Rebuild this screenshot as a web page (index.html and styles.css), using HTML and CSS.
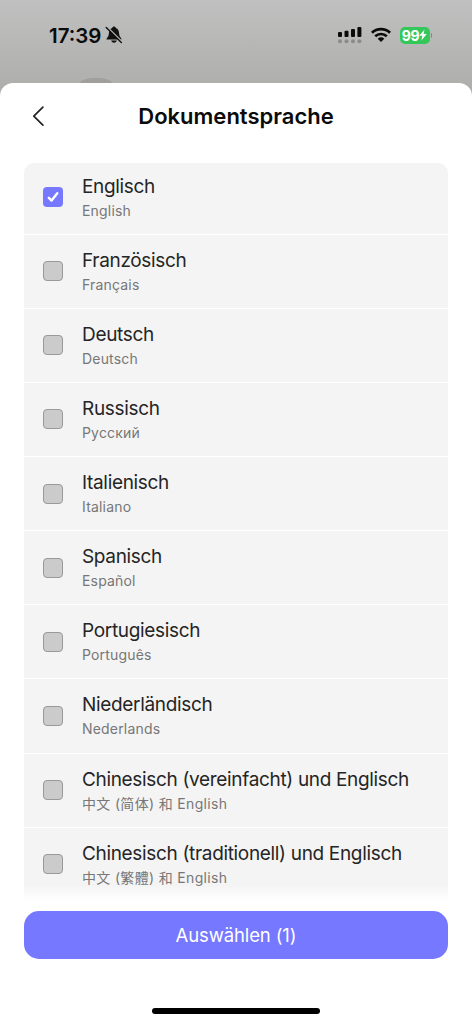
FILE: index.html
```html
<!DOCTYPE html>
<html lang="de">
<head>
<meta charset="utf-8">
<title>Dokumentsprache</title>
<link rel="stylesheet" href="styles.css">
</head>
<body>
<div class="screen">
  <header class="status">
    <div class="clock"><span class="time">17:39</span>
      <svg class="bell" width="18" height="18" viewBox="0 0 18 18"><path d="M1.4 13.4C1.6 11.8 3.6 10.8 3.8 8.2C4 4.4 5 2.5 7.2 1.9C7.6-.1 10.4-.1 10.8 1.9C13 2.5 14 4.4 14.2 8.2C14.4 10.8 16.4 11.8 16.6 13.4Z M6.2 14.5H11.8C11 17.5 7 17.5 6.2 14.5Z" fill="#111"/><path d="M2.2 1.1L17.4 16.1" stroke="#b6b6b6" stroke-width="1.5"/><path d="M1.2 1.5L16.3 16.4" stroke="#111" stroke-width="1.4" stroke-linecap="round"/></svg>
    </div>
    <div class="indicators">
      <svg width="24" height="18" viewBox="0 0 24 18"><g fill="#0b0b0b"><rect x="0" y="6" width="4" height="5" rx="1"/><rect x="6.5" y="4.8" width="4" height="6.2" rx="1"/><rect x="13" y="3" width="4" height="8" rx="1"/><rect x="19.4" y="1" width="4" height="10" rx="1"/></g><g fill="#8b8b8b"><circle cx="2" cy="15.2" r="2"/><circle cx="8.5" cy="15.2" r="2"/><circle cx="15" cy="15.2" r="2"/><circle cx="21.4" cy="15.2" r="2"/></g></svg>
      <svg class="wifi" width="20" height="16" viewBox="0 0 20 16"><g fill="none" stroke="#0b0b0b" stroke-width="2.7"><path d="M.9 5.7C6 .8 14 .8 19.1 5.7"/><path d="M4.2 9.3C7.5 6.2 12.5 6.2 15.8 9.3"/></g><path d="M6.7 11.7C8.6 9.9 11.4 9.9 13.3 11.7L10 15.1Z" fill="#0b0b0b"/></svg>
      <div class="battery"><span>99</span><svg width="8" height="12" viewBox="0 0 8 12"><path d="M5.5.5L.3 6.8H3.3L2.4 11.5L7.7 5H4.6Z" fill="#fff"/></svg></div>
      <i class="battery-tip"></i>
    </div>
    <i class="grabber"></i>
  </header>
  <main class="sheet">
    <div class="title-bar">
      <svg class="back" width="14" height="22" viewBox="0 0 14 22"><path d="M11.9 2.2L2.8 11.2L11.9 20.2" fill="none" stroke="#222" stroke-width="1.7" stroke-linecap="round" stroke-linejoin="round"/></svg>
      <h1>Dokumentsprache</h1>
    </div>
    <div class="list">
      <label class="row"><span class="box checked"><svg width="20" height="20" viewBox="0 0 20 20"><path d="M5.8 10.8L8.6 13.6L14.3 6.2" fill="none" stroke="#fff" stroke-width="2.4" stroke-linecap="round" stroke-linejoin="round"/></svg></span><span class="labels"><b>Englisch</b><small>English</small></span></label>
      <label class="row"><span class="box"></span><span class="labels"><b>Französisch</b><small>Français</small></span></label>
      <label class="row"><span class="box"></span><span class="labels"><b>Deutsch</b><small>Deutsch</small></span></label>
      <label class="row"><span class="box"></span><span class="labels"><b>Russisch</b><small>Русский</small></span></label>
      <label class="row"><span class="box"></span><span class="labels"><b>Italienisch</b><small>Italiano</small></span></label>
      <label class="row"><span class="box"></span><span class="labels"><b>Spanisch</b><small>Español</small></span></label>
      <label class="row"><span class="box"></span><span class="labels"><b>Portugiesisch</b><small>Português</small></span></label>
      <label class="row"><span class="box"></span><span class="labels"><b>Niederländisch</b><small>Nederlands</small></span></label>
      <label class="row"><span class="box"></span><span class="labels"><b>Chinesisch (vereinfacht) und Englisch</b><small class="cjk" lang="zh-Hans">中文 (简体) 和 English</small></span></label>
      <label class="row"><span class="box"></span><span class="labels"><b>Chinesisch (traditionell) und Englisch</b><small class="cjk" lang="zh-Hant">中文 (繁體) 和 English</small></span></label>
      <div class="fade"></div>
    </div>
    <button class="select">Auswählen (1)</button>
    <div class="home"></div>
  </main>
</div>
</body>
</html>
```
FILE: styles.css
```css
* { box-sizing: border-box; }
body { margin: 0; font-family: Inter, "Noto Sans CJK SC", sans-serif; }
.screen { width: 472px; height: 1024px; overflow: hidden; display: flex; flex-direction: column; background: linear-gradient(#c0c0c0, #adadab 94px); }
.status { position: relative; flex: none; height: 83px; padding: 26px 40px 0 49px; display: flex; justify-content: space-between; align-items: flex-start; }
.clock { display: flex; gap: 4px; align-items: center; height: 18px; }
.time { font-size: 20.5px; font-weight: 600; letter-spacing: 0; color: #0b0b0b; }
.indicators { display: flex; align-items: center; height: 18px; }
.wifi { margin-left: 8.5px; }
.battery { margin-left: 9px; width: 30px; height: 17px; border-radius: 5px; background: #34c759; color: #fff; display: flex; align-items: center; justify-content: center; font-size: 14px; font-weight: 700; line-height: 17px; letter-spacing: -0.3px; }
.battery-tip { width: 1.5px; height: 5px; margin-left: 1px; border-radius: 0 2px 2px 0; background: #888; }
.grabber { position: absolute; left: 80px; bottom: 0; width: 32px; height: 5px; border-radius: 16px 16px 0 0 / 5px 5px 0 0; background: #a09f9e; }
.sheet { flex: 1; background: #fff; border-radius: 13px 13px 0 0; padding: 0 24px; display: flex; flex-direction: column; }
.title-bar { height: 80px; display: grid; grid-template-columns: 30px 1fr 30px; padding-top: 22px; align-items: start; }
.back { margin-left: 7px; }
h1 { margin: 0; font-size: 22px; line-height: 22px; font-weight: 600; letter-spacing: 0; text-align: center; color: #0b0b0b; white-space: nowrap; }
.list { position: relative; height: 738px; overflow: hidden; border-radius: 10px 10px 0 0; background: #f4f4f4; flex: none; }
.row { height: 74.15px; display: flex; padding: 13px 19px 0; gap: 19px; border-bottom: 1.5px solid #fff; }
.row:first-child { height: 71.6px; padding-top: 10.5px; }
.row:nth-last-child(2) { border-bottom: 0; }
.box { flex: none; width: 20px; height: 20px; margin-top: 13.5px; border: 1px solid #999; border-radius: 4px; background: #cbcbcb; }
.box.checked { border: 0; background: #7678ff; }
.box svg { display: block; }
.labels { display: flex; flex-direction: column; white-space: nowrap; }
.labels b { font-size: 19px; line-height: 26px; font-weight: 400; letter-spacing: -0.33px; color: #252525; }
.labels small { font-size: 14px; line-height: 20px; margin-top: 1px; letter-spacing: 0.18px; color: #777; }
.labels .cjk { letter-spacing: 0.33px; }
.fade { position: absolute; left: 0; right: 0; bottom: 0; height: 16px; background: linear-gradient(rgba(255,255,255,0), #fff); }
.select { flex: none; margin: 10px 0 0; padding: 0; height: 48px; border: 0; border-radius: 15px; background: #7678ff; color: #fff; font-family: inherit; font-size: 18.5px; letter-spacing: -0.12px; }
.home { width: 168px; height: 6px; margin: 49px auto 0; border-radius: 3px; background: #000; }
```
